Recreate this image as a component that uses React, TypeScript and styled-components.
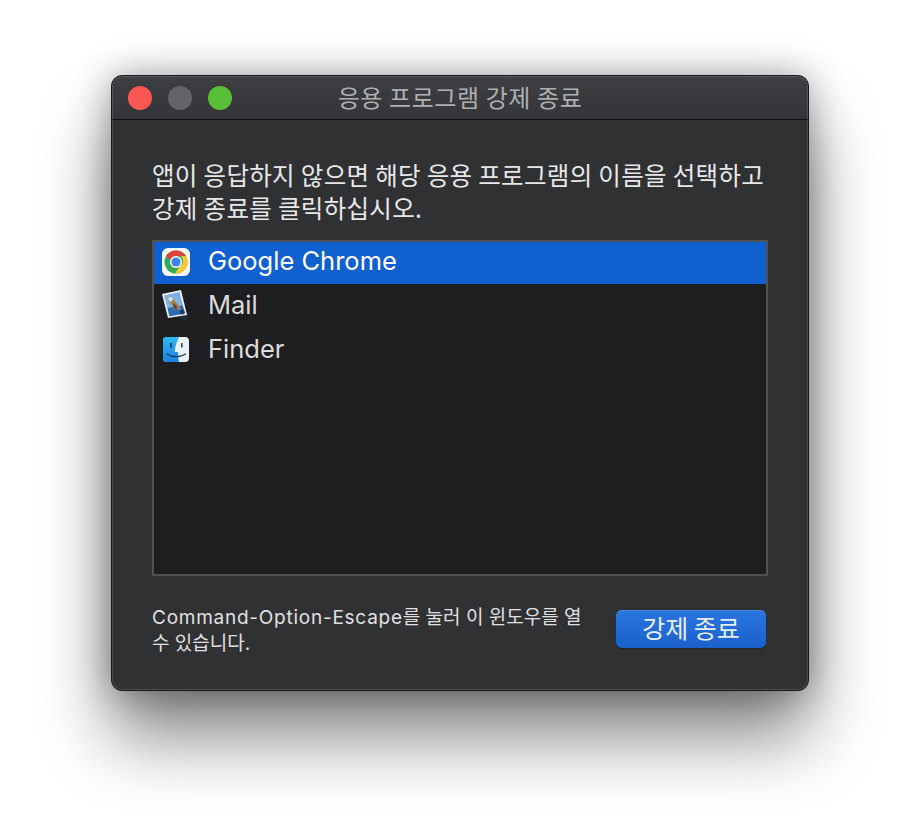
import React from 'react';
import styled, {createGlobalStyle} from 'styled-components';

const GlobalStyle = createGlobalStyle`
  html, body {
    margin: 0;
    padding: 0;
    background: #ffffff;
    overflow: hidden;
  }
  * {
    box-sizing: border-box;
  }
`;

const Page = styled.div`
  width: 920px;
  height: 838px;
  padding: 75px 0 0 111px;
  font-family: "Inter", "Noto Sans CJK KR", sans-serif;
`;

const Window = styled.div`
  width: 698px;
  height: 616px;
  display: flex;
  flex-direction: column;
  background: #303133;
  border: 1px solid #161618;
  border-radius: 11px;
  overflow: hidden;
  box-shadow: 0 46px 70px rgba(0, 0, 0, 0.48), 0 0 36px rgba(0, 0, 0, 0.34);
  position: relative;
`;

const Frame = styled.div`
  position: absolute;
  inset: 0;
  border-radius: 10px;
  box-shadow: inset 0 0 0 1px rgba(255, 255, 255, 0.15);
  pointer-events: none;
`;

const TitleBar = styled.div`
  flex: 0 0 44px;
  position: relative;
  display: flex;
  align-items: center;
  justify-content: center;
  background: linear-gradient(#3e3f43, #343538);
  border-bottom: 1px solid #111113;
`;

const Lights = styled.div`
  position: absolute;
  left: 16px;
  top: 10px;
  display: flex;
  gap: 16px;
`;

const Light = styled.span<{$color: string}>`
  width: 24px;
  height: 24px;
  border-radius: 50%;
  background: ${(props) => props.$color};
`;

const Title = styled.div`
  font-family: "Noto Sans CJK KR", sans-serif;
  font-size: 24px;
  line-height: 42px;
  color: #aeafb1;
  letter-spacing: 0.6px;
  margin-bottom: 1px;
`;

const Content = styled.div`
  flex: 1;
  display: flex;
  flex-direction: column;
  padding: 38px 40px 40px 40px;
`;

const Prompt = styled.p`
  margin: 0 0 16px;
  font-family: "Noto Sans CJK KR", sans-serif;
  font-size: 24.5px;
  line-height: 33px;
  height: 66px;
  color: #e8e8e9;
  white-space: nowrap;
  letter-spacing: 0.32px;
`;

const AppList = styled.div`
  width: 616px;
  height: 336px;
  background: #1d1e20;
  border: 2px solid #515254;
  display: flex;
  flex-direction: column;
`;

const AppRow = styled.div<{$selected?: boolean}>`
  height: ${(props) => (props.$selected ? '42px' : '44px')};
  padding: 0 0 ${(props) => (props.$selected ? '4px' : '2px')} 6px;
  flex: none;
  display: flex;
  align-items: center;
  gap: 16px;
  background: ${(props) => (props.$selected ? '#1160d0' : 'transparent')};
  color: ${(props) => (props.$selected ? '#ffffff' : '#dcdcdd')};
  font-family: "Inter", sans-serif;
  font-size: 25.5px;
`;

const RowLabel = styled.span`
  margin-bottom: 2px;
`;

const IconSlot = styled.span`
  width: 32px;
  height: 32px;
  flex: none;
  display: block;
  svg {
    display: block;
  }
`;

const Footer = styled.div`
  display: flex;
  align-items: center;
  justify-content: space-between;
  margin-top: 29px;
`;

const Hint = styled.div`
  white-space: nowrap;
  font-family: "Inter", "Noto Sans CJK KR", sans-serif;
  font-size: 19px;
  line-height: 26px;
  color: #e0e0e2;
`;

const Shortcut = styled.span`
  letter-spacing: 0.75px;
`;

const ForceQuit = styled.button`
  width: 150px;
  height: 38px;
  margin: 0 2px 4px 0;
  border: none;
  border-radius: 6px;
  background: linear-gradient(#2a75e0, #1a61ca);
  box-shadow: inset 0 1px 0 rgba(255, 255, 255, 0.14), 0 1px 1px rgba(0, 0, 0, 0.3);
  color: #e6edf8;
  font-family: "Noto Sans CJK KR", sans-serif;
  font-size: 25px;
  line-height: 34px;
  padding: 0 0 4px;
`;

const ChromeIcon = () => (
  <svg width="32" height="32" viewBox="0 0 32 32">
    <g transform="translate(0 1)">
      <rect x="2" y="2" width="28" height="28" rx="6" fill="#f6f6f7" />
      <circle cx="16" cy="16" r="11.5" fill="#34a853" />
      <path d="M16 4.500a11.500 11.500 0 0 1 10 5.750H16a5.750 5.750 0 0 0-5.400 3.800L6 10.250A11.500 11.500 0 0 1 16 4.500z" fill="#db4437" />
      <path d="M26 10.250A11.500 11.500 0 0 1 15 27.500l5.200-7.600a5.750 5.750 0 0 0 .5-9.650z" fill="#fcc934" />
      <circle cx="16" cy="16" r="6" fill="#ffffff" />
      <circle cx="16" cy="16" r="4.600" fill="#3f81ee" />
    </g>
  </svg>
);

const MailIcon = () => (
  <svg width="32" height="32" viewBox="0 0 32 32">
    <circle cx="24" cy="26" r="5" fill="#2a3a52" opacity="0.5" />
    <polygon points="2,5 21,1 27,26 8,29" fill="#eef1f5" />
    <polygon points="4,6.500 19.500,3 25,24.500 9.500,27.300" fill="#7fb2e2" />
    <polygon points="7.500,19 22.500,16.500 25,24.500 9.500,27.300" fill="#2c6cb4" />
    <path d="M8 9l3-1 3 3 6 7 1 4-5-3-2 3-1-5-3-3 1-2z" fill="#a97f4c" />
    <path d="M8 9l3-1 2 2-2 3z" fill="#f0e8d8" />
    <path d="M13 14l4 3-1 3-2-1z" fill="#5a4530" />
    <circle cx="22" cy="23" r="2.500" fill="#1f3f6d" />
  </svg>
);

const FinderIcon = () => (
  <svg width="32" height="32" viewBox="0 0 32 32">
    <defs>
      <linearGradient id="finderBlue" x1="0" y1="0" x2="0" y2="1">
        <stop offset="0" stopColor="#30b8f6" />
        <stop offset="1" stopColor="#1a80e4" />
      </linearGradient>
    </defs>
    <rect x="3" y="4" width="26" height="25" rx="4" fill="#e9f1f9" />
    <path d="M7 4h12c-2.500 5-4 10-4.300 15H18c0 3.500.2 6 1 10H7a4 4 0 0 1-4-4V8a4 4 0 0 1 4-4z" fill="url(#finderBlue)" />
    <rect x="10" y="10" width="1.700" height="4.500" fill="#12334f" />
    <rect x="21" y="10" width="1.700" height="4.500" fill="#41515f" />
    <path d="M7 21c5 3.500 13 3.500 18.500 0" fill="none" stroke="#1c3a55" strokeWidth="1.300" strokeLinecap="round" />
  </svg>
);

const apps = [
  {name: 'Google Chrome', icon: <ChromeIcon />, selected: true},
  {name: 'Mail', icon: <MailIcon />},
  {name: 'Finder', icon: <FinderIcon />},
];

export default function App() {
  return (
    <>
      <GlobalStyle />
      <Page>
        <Window>
          <TitleBar>
            <Lights>
              <Light $color="#fc5753" />
              <Light $color="#636467" />
              <Light $color="#57c038" />
            </Lights>
            <Title>응용 프로그램 강제 종료</Title>
          </TitleBar>
          <Content>
            <Prompt>
              앱이 응답하지 않으면 해당 응용 프로그램의 이름을 선택하고
              <br />
              강제 종료를 클릭하십시오.
            </Prompt>
            <AppList>
              {apps.map((app) => (
                <AppRow key={app.name} $selected={app.selected}>
                  <IconSlot>{app.icon}</IconSlot>
                  <RowLabel>{app.name}</RowLabel>
                </AppRow>
              ))}
            </AppList>
            <Footer>
              <Hint>
                <Shortcut>Command-Option-Escape</Shortcut>를 눌러 이 윈도우를 열
                <br />
                수 있습니다.
              </Hint>
              <ForceQuit>강제 종료</ForceQuit>
            </Footer>
          </Content>
          <Frame />
        </Window>
      </Page>
    </>
  );
}
